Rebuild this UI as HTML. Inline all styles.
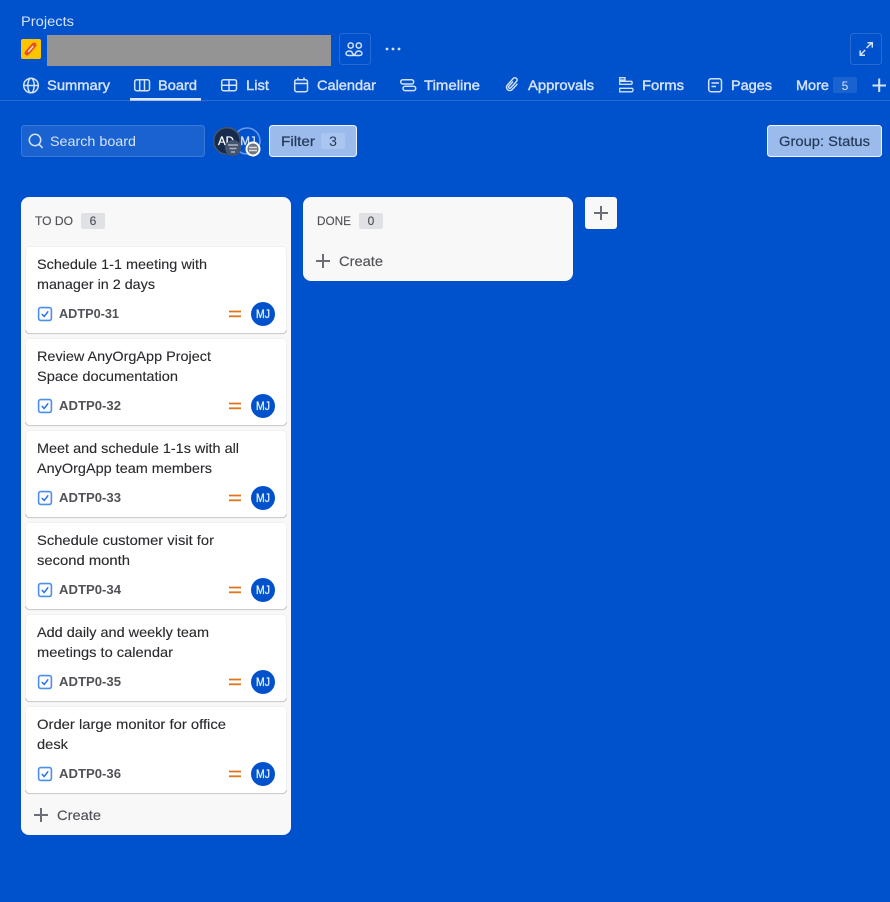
<!DOCTYPE html>
<html><head><meta charset="utf-8"><style>
html,body{margin:0;padding:0;background:#0052cc;width:890px;height:902px;overflow:hidden}
svg{display:block}
text{font-family:"Liberation Sans",sans-serif;font-size:14px}
.h{fill:#d4e2f9;stroke:none}
.b{fill:#d4e2f9;stroke:#d4e2f9;stroke-width:.4}
.t{fill:#292a2e;stroke:#292a2e;stroke-width:.12}
.k{fill:#505258;font-weight:bold;font-size:12.5px}
.c{fill:#505258;stroke:#505258;stroke-width:.15}
.i{fill:none;stroke:#d4e2f9;stroke-width:1.5}
.p{stroke:#6b6e76;stroke-width:2;fill:none}
</style></head><body>
<svg width="890" height="902" viewBox="0 0 890 902" xmlns="http://www.w3.org/2000/svg">
<defs>
<g id="meta">
<rect x=".5" y=".5" width="261" height="87" rx="4" fill="#fff" stroke="#f0f0f1"/>
<path d="M.5 84a4 4 0 0 0 4 3.600h253a4 4 0 0 0 4-3.600" fill="none" stroke="#c6c7ca" stroke-width="1"/>
<rect x="13.600" y="61.600" width="12.800" height="12.800" rx="2" fill="#fff" stroke="#4c8df0" stroke-width="1.600"/>
<path d="M16.800 68l2.400 2.500 4-5.200" fill="none" stroke="#2a72e0" stroke-width="1.500"/>
<rect x="204" y="64.600" width="12" height="1.800" fill="#e2741b"/>
<rect x="204" y="69.400" width="12" height="1.800" fill="#e2741b"/>
<circle cx="238" cy="68" r="12" fill="#0052cc"/>
<text x="238" y="72" text-anchor="middle" style="font-size:11.500px" fill="#e4edfb" stroke="#e4edfb" stroke-width=".3" textLength="14" lengthAdjust="spacingAndGlyphs">MJ</text>
</g>
</defs>
<rect width="890" height="902" fill="#0052cc"/>

<text class="h" x="21" y="26" style="font-size:13.500px" textLength="53" lengthAdjust="spacingAndGlyphs">Projects</text>
<rect x="21" y="39" width="20" height="20" rx="2" fill="#ffc400"/>
<path d="M27 53l7-8" stroke="#e8501f" stroke-width="5" stroke-linecap="round"/>
<path d="M28.500 51.500l4.400-5" stroke="#ffe3cf" stroke-width="1.400" stroke-linecap="round"/>
<rect x="47" y="35" width="284" height="31" fill="#949494"/>
<rect x="339.500" y="33.500" width="31" height="31" rx="3" fill="none" stroke="#2a6ad2"/>
<g class="i"><circle cx="350.700" cy="45.500" r="2.600"/><circle cx="358.800" cy="45.500" r="2.600"/><path d="M349.500 55.500h3c1.500 0 2.500-1 3-2.200 .5-1.200 1.500-2.300 3-2.300 1.700 0 3.500 .8 3.500 2.500 0 1.200-1 2-2.500 2h-4c-1.500 0-2.500-1-3-2.300-.5-1.200-1.500-2.200-3-2.200-2 0-3.500 1-3.500 2.500 0 1.200 1 2 2.500 2z"/></g>
<circle cx="387" cy="49" r="1.400" fill="#d4e2f9"/><circle cx="393" cy="49" r="1.400" fill="#d4e2f9"/><circle cx="399" cy="49" r="1.400" fill="#d4e2f9"/>
<rect x="850.500" y="33.500" width="31" height="31" rx="3" fill="none" stroke="#2a6ad2"/>
<g class="i"><path d="M866.500 48l5.500-5.300M867.500 42.800h4.800v4.800M865.200 50l-5 5M860.200 50.500v4.800h4.800"/></g>

<!-- tabs -->
<g class="i">
<circle cx="31" cy="85.500" r="7.300"/><ellipse cx="31" cy="85.500" rx="3.200" ry="7.300"/><path d="M23.500 85.500h15"/>
<rect x="134.700" y="79.700" width="14.800" height="11" rx="2"/><path d="M139.700 80v11M144.500 80v11"/>
<rect x="221.700" y="79.700" width="14.800" height="11" rx="2"/><path d="M222 85.300h14M229 80v11"/>
<rect x="294.700" y="79.700" width="12.800" height="12" rx="2"/><path d="M295 83.500h12M298 77.500v3M304 77.500v3"/>
<rect x="400.700" y="79.700" width="13" height="4.300" rx="2.100"/><rect x="403" y="86.300" width="12.700" height="4.300" rx="2.100"/>
<path d="M513 81.500l-4.200 4.800c-1 1.200 .8 2.800 1.900 1.600l5.800-6.500c2-2.200-1.300-5-3.300-2.900l-5.800 6.500c-3 3.400 2 7.700 5 4.400l5-5.600" stroke-width="1.400"/>
<path d="M619.700 77.700h5.300v2.300h-5.300zM619.700 81.300h11.300c1.600 0 1.600 3 0 3h-11.300zM619.700 88.300h12c1.800 0 1.800 3.500 0 3.500h-12z" stroke-width="1.300"/>
<rect x="708.700" y="78.700" width="12.800" height="13" rx="2.500"/><path d="M711.500 83h7.500M711.500 86.500h4.500"/>
</g>
<text class="b" x="47" y="90" textLength="63" lengthAdjust="spacingAndGlyphs">Summary</text>
<text class="b" x="158" y="90" textLength="39" lengthAdjust="spacingAndGlyphs">Board</text>
<text class="b" x="246" y="90" textLength="23" lengthAdjust="spacingAndGlyphs">List</text>
<text class="b" x="317" y="90" textLength="59" lengthAdjust="spacingAndGlyphs">Calendar</text>
<text class="b" x="424" y="90" textLength="56" lengthAdjust="spacingAndGlyphs">Timeline</text>
<text class="b" x="528" y="90" textLength="66" lengthAdjust="spacingAndGlyphs">Approvals</text>
<text class="b" x="642" y="90" textLength="42" lengthAdjust="spacingAndGlyphs">Forms</text>
<text class="b" x="731" y="90" textLength="41" lengthAdjust="spacingAndGlyphs">Pages</text>
<text class="b" x="796" y="90" textLength="33" lengthAdjust="spacingAndGlyphs">More</text>
<rect x="833" y="77" width="24" height="16" rx="2" fill="#1a62d0"/>
<text class="h" x="845" y="90" text-anchor="middle" style="font-size:12px">5</text>
<path d="M872.500 85.500h13.500M879.200 78.500v13.500" stroke="#d4e2f9" stroke-width="2"/>
<rect x="0" y="100" width="890" height="1" fill="#2a6ad2"/>
<rect x="130" y="98" width="71" height="2.700" fill="#dbe6f9"/>

<!-- search row -->
<rect x="21.500" y="125.500" width="183" height="31" rx="3" fill="#1a62d0" stroke="#3b78d8"/>
<circle cx="35" cy="140" r="5.700" fill="none" stroke="#d4e2f9" stroke-width="1.500"/><path d="M39 144.200l3.600 3.800" stroke="#d4e2f9" stroke-width="1.500"/>
<text class="h" x="50" y="146" textLength="86" lengthAdjust="spacingAndGlyphs">Search board</text>

<circle cx="247" cy="141" r="13" fill="#0052cc" stroke="#6b9ae6" stroke-width="1.500"/>
<text x="248" y="145" text-anchor="middle" fill="#d4e2f9" stroke="#d4e2f9" stroke-width=".3" style="font-size:11.500px">MJ</text>
<circle cx="253" cy="149" r="7.500" fill="#fff"/><circle cx="253" cy="149" r="5.500" fill="#6f7480"/>
<path d="M249 147.500h8M249 150.500h8" stroke="#d9dbdf" stroke-width="1.500"/>
<circle cx="227" cy="141" r="13.300" fill="#172b4d" stroke="#44546f" stroke-width="1.600"/>
<text x="226" y="145" text-anchor="middle" fill="#fff" stroke="#fff" stroke-width=".3" style="font-size:11.500px">AD</text>
<circle cx="233" cy="148" r="8" fill="#44546f"/>
<path d="M228 145h10M229.500 148.500h7M231 152h4" stroke="#aab1bd" stroke-width="1.500"/>

<rect x="269.500" y="125.500" width="87" height="31" rx="3" fill="#9bbbec" stroke="#f0f5fd"/>
<text x="281" y="146" textLength="34" lengthAdjust="spacingAndGlyphs" fill="#253858" stroke="#253858" stroke-width=".2">Filter</text>
<rect x="321" y="133" width="24" height="16" rx="2" fill="#a9c5f0"/>
<text x="333" y="146" text-anchor="middle" fill="#253858">3</text>

<rect x="767.500" y="125.500" width="114" height="31" rx="3" fill="#9bbbec" stroke="#f0f5fd"/>
<text x="779" y="146" textLength="91" lengthAdjust="spacingAndGlyphs" fill="#253858" stroke="#253858" stroke-width=".2">Group: Status</text>

<!-- column 1 -->
<rect x="21" y="197" width="270" height="638" rx="8" fill="#f8f8f8"/>
<text class="c" x="35" y="225" style="font-size:12px" textLength="38" lengthAdjust="spacingAndGlyphs">TO DO</text>
<rect x="81" y="213" width="24" height="16" rx="2" fill="#dfe1e5"/>
<text class="c" x="93" y="225" text-anchor="middle" style="font-size:12px">6</text>

<use href="#meta" x="25" y="246"/>
<use href="#meta" x="25" y="338"/>
<use href="#meta" x="25" y="430"/>
<use href="#meta" x="25" y="522"/>
<use href="#meta" x="25" y="614"/>
<use href="#meta" x="25" y="706"/>

<text class="t" x="37" y="269" textLength="170" lengthAdjust="spacingAndGlyphs">Schedule 1-1 meeting with</text>
<text class="t" x="37" y="289" textLength="118" lengthAdjust="spacingAndGlyphs">manager in 2 days</text>
<text class="k" x="59" y="318" textLength="60" lengthAdjust="spacingAndGlyphs">ADTP0-31</text>

<text class="t" x="37" y="361" textLength="174" lengthAdjust="spacingAndGlyphs">Review AnyOrgApp Project</text>
<text class="t" x="37" y="381" textLength="141" lengthAdjust="spacingAndGlyphs">Space documentation</text>
<text class="k" x="59" y="410" textLength="62" lengthAdjust="spacingAndGlyphs">ADTP0-32</text>

<text class="t" x="37" y="453" textLength="202" lengthAdjust="spacingAndGlyphs">Meet and schedule 1-1s with all</text>
<text class="t" x="37" y="473" textLength="175" lengthAdjust="spacingAndGlyphs">AnyOrgApp team members</text>
<text class="k" x="59" y="502" textLength="62" lengthAdjust="spacingAndGlyphs">ADTP0-33</text>

<text class="t" x="37" y="545" textLength="177" lengthAdjust="spacingAndGlyphs">Schedule customer visit for</text>
<text class="t" x="37" y="565" textLength="93" lengthAdjust="spacingAndGlyphs">second month</text>
<text class="k" x="59" y="594" textLength="62" lengthAdjust="spacingAndGlyphs">ADTP0-34</text>

<text class="t" x="37" y="637" textLength="172" lengthAdjust="spacingAndGlyphs">Add daily and weekly team</text>
<text class="t" x="37" y="657" textLength="136" lengthAdjust="spacingAndGlyphs">meetings to calendar</text>
<text class="k" x="59" y="686" textLength="62" lengthAdjust="spacingAndGlyphs">ADTP0-35</text>

<text class="t" x="37" y="729" textLength="189" lengthAdjust="spacingAndGlyphs">Order large monitor for office</text>
<text class="t" x="37" y="749" textLength="31" lengthAdjust="spacingAndGlyphs">desk</text>
<text class="k" x="59" y="778" textLength="62" lengthAdjust="spacingAndGlyphs">ADTP0-36</text>

<path class="p" d="M34 815h14M41 808v14"/>
<text class="c" x="57" y="820" textLength="44" lengthAdjust="spacingAndGlyphs">Create</text>

<!-- column 2 -->
<rect x="303" y="197" width="270" height="84" rx="8" fill="#f8f8f8"/>
<text class="c" x="317" y="225" style="font-size:12px" textLength="34" lengthAdjust="spacingAndGlyphs">DONE</text>
<rect x="359" y="213" width="24" height="16" rx="2" fill="#dfe1e5"/>
<text class="c" x="371" y="225" text-anchor="middle" style="font-size:12px">0</text>
<path class="p" d="M316 261h14M323 254v14"/>
<text class="c" x="339" y="266" textLength="44" lengthAdjust="spacingAndGlyphs">Create</text>

<rect x="585" y="197" width="32" height="32" rx="3" fill="#f8f8f8"/>
<path class="p" d="M594 213h14M601 206v14"/>
</svg>
</body></html>
